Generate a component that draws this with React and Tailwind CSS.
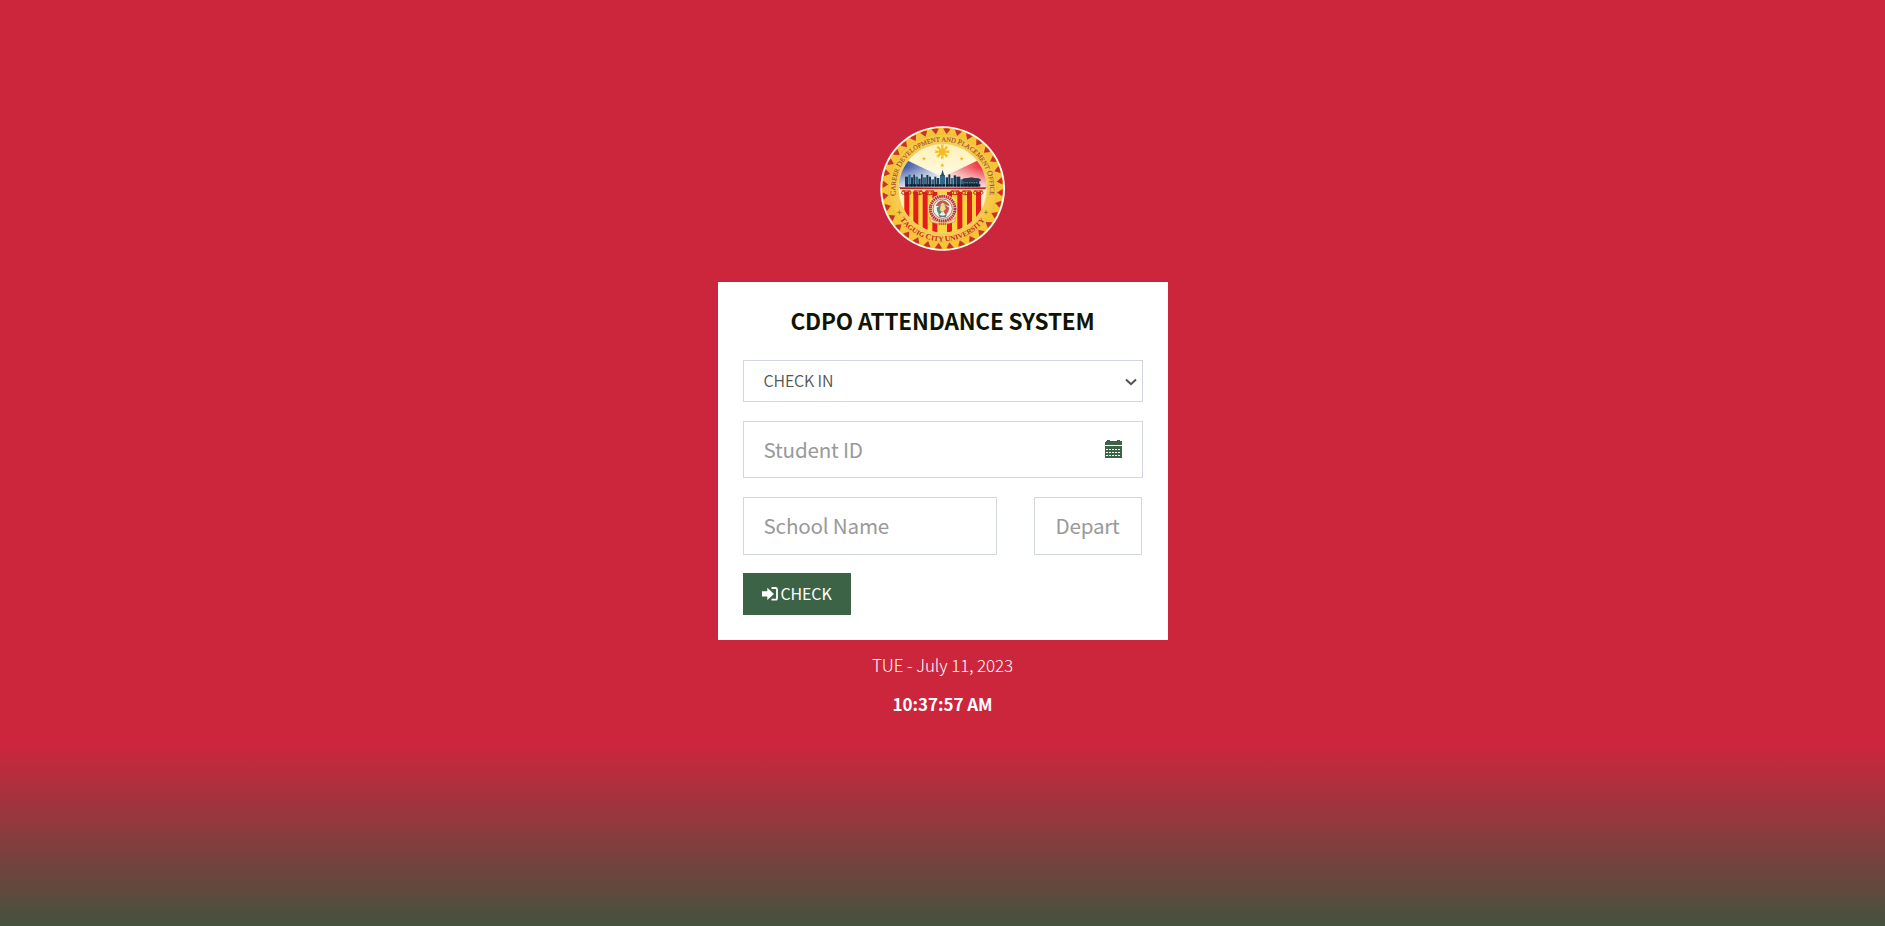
import React from "react";

const spikes = Array.from({ length: 32 }, (_, i) => (i * 360) / 32 + 4);
const columns = [102, 129, 157, 186, 230, 261, 290, 317];
const towers = [
  [104, 182, 9], [114, 176, 7], [122, 184, 6], [129, 176, 5], [135, 182, 8], [144, 188, 7],
  [152, 175, 5], [158, 184, 9], [168, 177, 6], [175, 182, 7], [183, 190, 8], [192, 182, 6],
  [199, 186, 8], [209, 177, 15], [226, 184, 7], [234, 175, 6], [241, 186, 8], [250, 178, 7],
  [258, 182, 12], [270, 190, 10], [279, 187, 48],
];

function Seal() {
  return (
    <svg className="h-[125px] w-[125px]" viewBox="29 30 375 375" role="img" aria-label="Career Development and Placement Office">
      <defs>
        <clipPath id="disc"><circle cx="217" cy="217" r="132" /></clipPath>
        <radialGradient id="gold"><stop offset="0.7" stopColor="#f6cd5c" /><stop offset="1" stopColor="#f9c12c" /></radialGradient>
        <linearGradient id="sky" x1="0" y1="0" x2="0" y2="1"><stop offset="0" stopColor="#fdf0b4" /><stop offset="1" stopColor="#fffdf2" /></linearGradient>
        <linearGradient id="blue" gradientUnits="userSpaceOnUse" x1="105" y1="130" x2="205" y2="195"><stop offset="0" stopColor="#34509f" /><stop offset="1" stopColor="#dfe4f2" /></linearGradient>
        <linearGradient id="red" gradientUnits="userSpaceOnUse" x1="329" y1="130" x2="229" y2="195"><stop offset="0" stopColor="#ee2733" /><stop offset="1" stopColor="#fbe3de" /></linearGradient>
        <linearGradient id="haze" x1="0" y1="0" x2="0" y2="1"><stop offset="0" stopColor="#fff" stopOpacity="0" /><stop offset="1" stopColor="#fff" stopOpacity="0.75" /></linearGradient>
        <path id="upper" d="M76.500 239 A142 142 0 1 1 357.500 239" />
        <path id="lower" d="M84 304 A159 159 0 0 0 350 304" />
      </defs>
      <circle cx="217" cy="217.500" r="187" fill="#fff" />
      <circle cx="217" cy="217.500" r="182" fill="url(#gold)" />
      {spikes.map((a) => (
        <path key={a} d="M206 38 Q217 35 228 38 L217.500 54 Z" fill="#c4342d" transform={`rotate(${a} 217 217.500)`} />
      ))}
      <circle cx="217" cy="217" r="163" fill="none" stroke="#e6b23b" strokeWidth="1.500" />
      <circle cx="217" cy="217" r="132" fill="#fff5c9" stroke="#f5dc85" strokeWidth="3" />
      <g clipPath="url(#disc)">
        <rect x="80" y="80" width="274" height="135" fill="url(#sky)" />
        <path d="M217 184 L75 116 V215 H217Z" fill="url(#blue)" />
        <path d="M217 184 L359 116 V215 H217Z" fill="url(#red)" />
        <rect x="80" y="155" width="274" height="58" fill="url(#haze)" />
        <rect x="80" y="222" width="274" height="130" fill="#fbd33a" />
        {columns.map((x) => <rect key={x} x={x} y="228" width="15" height="125" fill="#e41c20" />)}
        <path d="M80 222 L101 222 V300 L80 280Z M333 222 H354 V280 L333 300Z" fill="#fff3bd" />
      </g>
      <g>
        {towers.map(([x, y, w], i) => <rect key={x} x={x} y={y} width={w} height={212 - y} fill={i % 3 === 1 ? "#2e6b8b" : "#173a57"} />)}
        <path d="M211 180 L217 161 L222 180Z" fill="#1d4f70" />
        <path d="M276 190 L303 184 L331 190 V195 H276Z" fill="#333a4c" />
      </g>
      <path d="M106 208 H330" stroke="#101c2c" strokeWidth="7" strokeDasharray="9 2" />
      <path d="M282 200 H324" stroke="#7f93a3" strokeWidth="3" strokeDasharray="4 3" />
      <path d="M89 217 H346" stroke="#b82624" strokeWidth="5" />
      <path d="M93 223 H341" stroke="#f8d28c" strokeWidth="3" />
      {[96, 131, 166, 242, 277, 312].map((x) => (
        <g key={x} fill="none" stroke="#c12522" strokeWidth="3">
          <circle cx={x + 3} cy="230" r="5" /><circle cx={x + 21} cy="230" r="5" /><path d={`M${x} 225 H${x + 24} M${x + 5} 236 H${x + 19}`} />
        </g>
      ))}
      <g fill="#f5bb24">
        <circle cx="216" cy="107" r="11" />
        {[0, 45, 90, 135, 180, 225, 270, 315].map((a) => <path key={a} d="M213 96 L212 83 L216 88 L220 83 L219 96Z" transform={`rotate(${a} 216 107)`} />)}
        {[[161, 128], [216, 148], [274, 128]].map(([x, y]) => (
          <path key={x} d="M0-7 L1.700-2.300 L6.700-2 L2.800 1 L4 5.700 L0 3 L-4 5.700 L-2.800 1 L-6.700-2 L-1.700-2.300Z" transform={`translate(${x} ${y})`} />
        ))}
      </g>
      <circle cx="217" cy="278" r="43" fill="#fae7c6" />
      <circle cx="217" cy="278" r="37" fill="none" stroke="#c0303a" strokeWidth="9" strokeDasharray="5 1.500" />
      <circle cx="217" cy="278" r="29" fill="#f5f0e7" stroke="#5e5360" strokeWidth="2" />
      <path d="M196 270 Q201 255 217 253 Q233 256 238 270 L228 268 L217 260 L207 270Z" fill="#c25c43" />
      <path d="M199 275 L211 267 L217 284 L207 296 Q199 287 199 275Z" fill="#4e9177" />
      <path d="M223 266 L237 275 Q236 288 226 297 L218 284Z" fill="#d7514c" />
      <path d="M210 270 L222 264 L227 278 L217 289 L208 283Z" fill="#eadb8d" stroke="#8d7862" />
      <path d="M203 294 Q217 304 231 294 L226 303 H208Z" fill="#66738c" />
      <path d="M178 304 Q191 318 217 320 Q243 318 256 304 L253 318 Q217 331 181 318Z" fill="#f2d7a1" stroke="#c67b48" strokeWidth="1.500" />
      <path d="M205 324 H229" stroke="#b54a31" strokeWidth="5" strokeDasharray="4 2" />
      <g fontFamily="Liberation Serif, serif" fontSize="21">
        <text fill="#97482a" stroke="#97482a" strokeWidth="0.300" fontSize="19.500"><textPath href="#upper" textLength="485" lengthAdjust="spacingAndGlyphs"><tspan fontSize="23">C</tspan>AREER <tspan fontSize="23">D</tspan>EVELOPMENT AND <tspan fontSize="23">P</tspan>LACEMENT <tspan fontSize="23">O</tspan>FFICE</textPath></text>
        <text fill="#c32b20" fontWeight="700"><textPath href="#lower" startOffset="8" textLength="296" lengthAdjust="spacingAndGlyphs"><tspan fontSize="23">T</tspan>AGUIG <tspan fontSize="23">C</tspan>ITY <tspan fontSize="23">U</tspan>NIVERSITY</textPath></text>
      </g>
      {[[87, 289], [347, 289]].map(([x, y]) => (
        <path key={x} d="M0-9 L2-2 L9 0 L2 2 L0 9 L-2 2 L-9 0 L-2-2Z" fill="#a98224" transform={`translate(${x} ${y})`} />
      ))}
    </svg>
  );
}

function CalendarIcon() {
  return (
    <svg className="-mt-px h-[18px] w-[17px]" viewBox="0 0 17 18" fill="#3d6347" shapeRendering="crispEdges">
      <path d="M0 2 L1 1 H2 V0 H5 V1 H12 V0 H15 V1 H16 L17 2 V5 H0Z" />
      <path d="M0 6 H17 V18 H0Z" />
      <path d="M1 9.500 H16 M1 12.500 H16 M1 15.500 H16" stroke="#fff" strokeWidth="1" strokeDasharray="2 1" />
    </svg>
  );
}

function LogInIcon() {
  return (
    <svg className="h-[14px] w-4 shrink-0" viewBox="0 0 16 14">
      <path d="M0 4.300 H5.300 V0.800 L12 6.900 L5.300 13 V9.500 H0Z" fill="#fff" />
      <path d="M9.500 1 H13.500 Q15 1 15 2.500 V11 Q15 12.700 13.500 12.700 H9.500" fill="none" stroke="#fff" strokeWidth="1.800" />
    </svg>
  );
}

const field = "min-w-0 pb-[2px] text-[20.6px] tracking-[-0.2px] text-[#555] outline-none placeholder:text-[#999] placeholder:opacity-100";

export default function App() {
  return (
    <main className="flex h-[926px] w-full flex-col items-center overflow-hidden bg-[linear-gradient(to_bottom,#cc263d_0px,#cc263d_746px,#44523e_926px)] pt-[126px] font-['Noto_Sans_CJK_JP','Noto_Sans_CJK_SC',sans-serif]">
      <Seal />
      <section className="mt-[31px] h-[358px] w-[450px] bg-white px-[25px]">
        <h1 className="pt-[22px] text-center text-[22.500px] leading-[32px] tracking-[-0.15px] font-bold text-[#111500]">CDPO ATTENDANCE SYSTEM</h1>
        <div className="mt-6 flex h-[42px] items-center justify-between border border-[#d2d6de] pr-[5px] pl-5 text-[16px] tracking-[-0.15px] font-[350] text-[#555]">
          <span className="pb-[2px]">CHECK IN</span>
          <svg className="mt-px h-2 w-3" viewBox="0 0 12 8" fill="none" stroke="#505050" strokeWidth="2"><path d="M1 1.500 L6 6.200 L11 1.500" /></svg>
        </div>
        <div className="mt-[19px] flex h-[57px] items-center border border-[#d2d6de] pr-5">
          <input className={`${field} h-full flex-1 px-5`} placeholder="Student ID" />
          <CalendarIcon />
        </div>
        <div className="mt-[19px] flex h-[58px] gap-[37px]">
          <input className={`${field} w-[254px] border border-[#d2d6de] px-5`} placeholder="School Name" />
          <input className={`${field} w-[108px] border border-[#d2d6de] pr-[21px] pl-[21px]`} placeholder="Department" />
        </div>
        <button className="mt-[18px] flex h-[42px] w-[108px] items-center gap-[3px] bg-[#3d6347] pl-[19px] text-[16px] tracking-[-0.15px] text-white">
          <LogInIcon />
          <span className="pb-[2px]">CHECK</span>
        </button>
      </section>
      <p className="mt-3 text-[17px] leading-[26px] tracking-[-0.1px] font-light text-white">TUE - July 11, 2023</p>
      <p className="mt-[13px] text-[17px] leading-[26px] tracking-[-0.05px] font-bold text-white">10:37:57 AM</p>
    </main>
  );
}
